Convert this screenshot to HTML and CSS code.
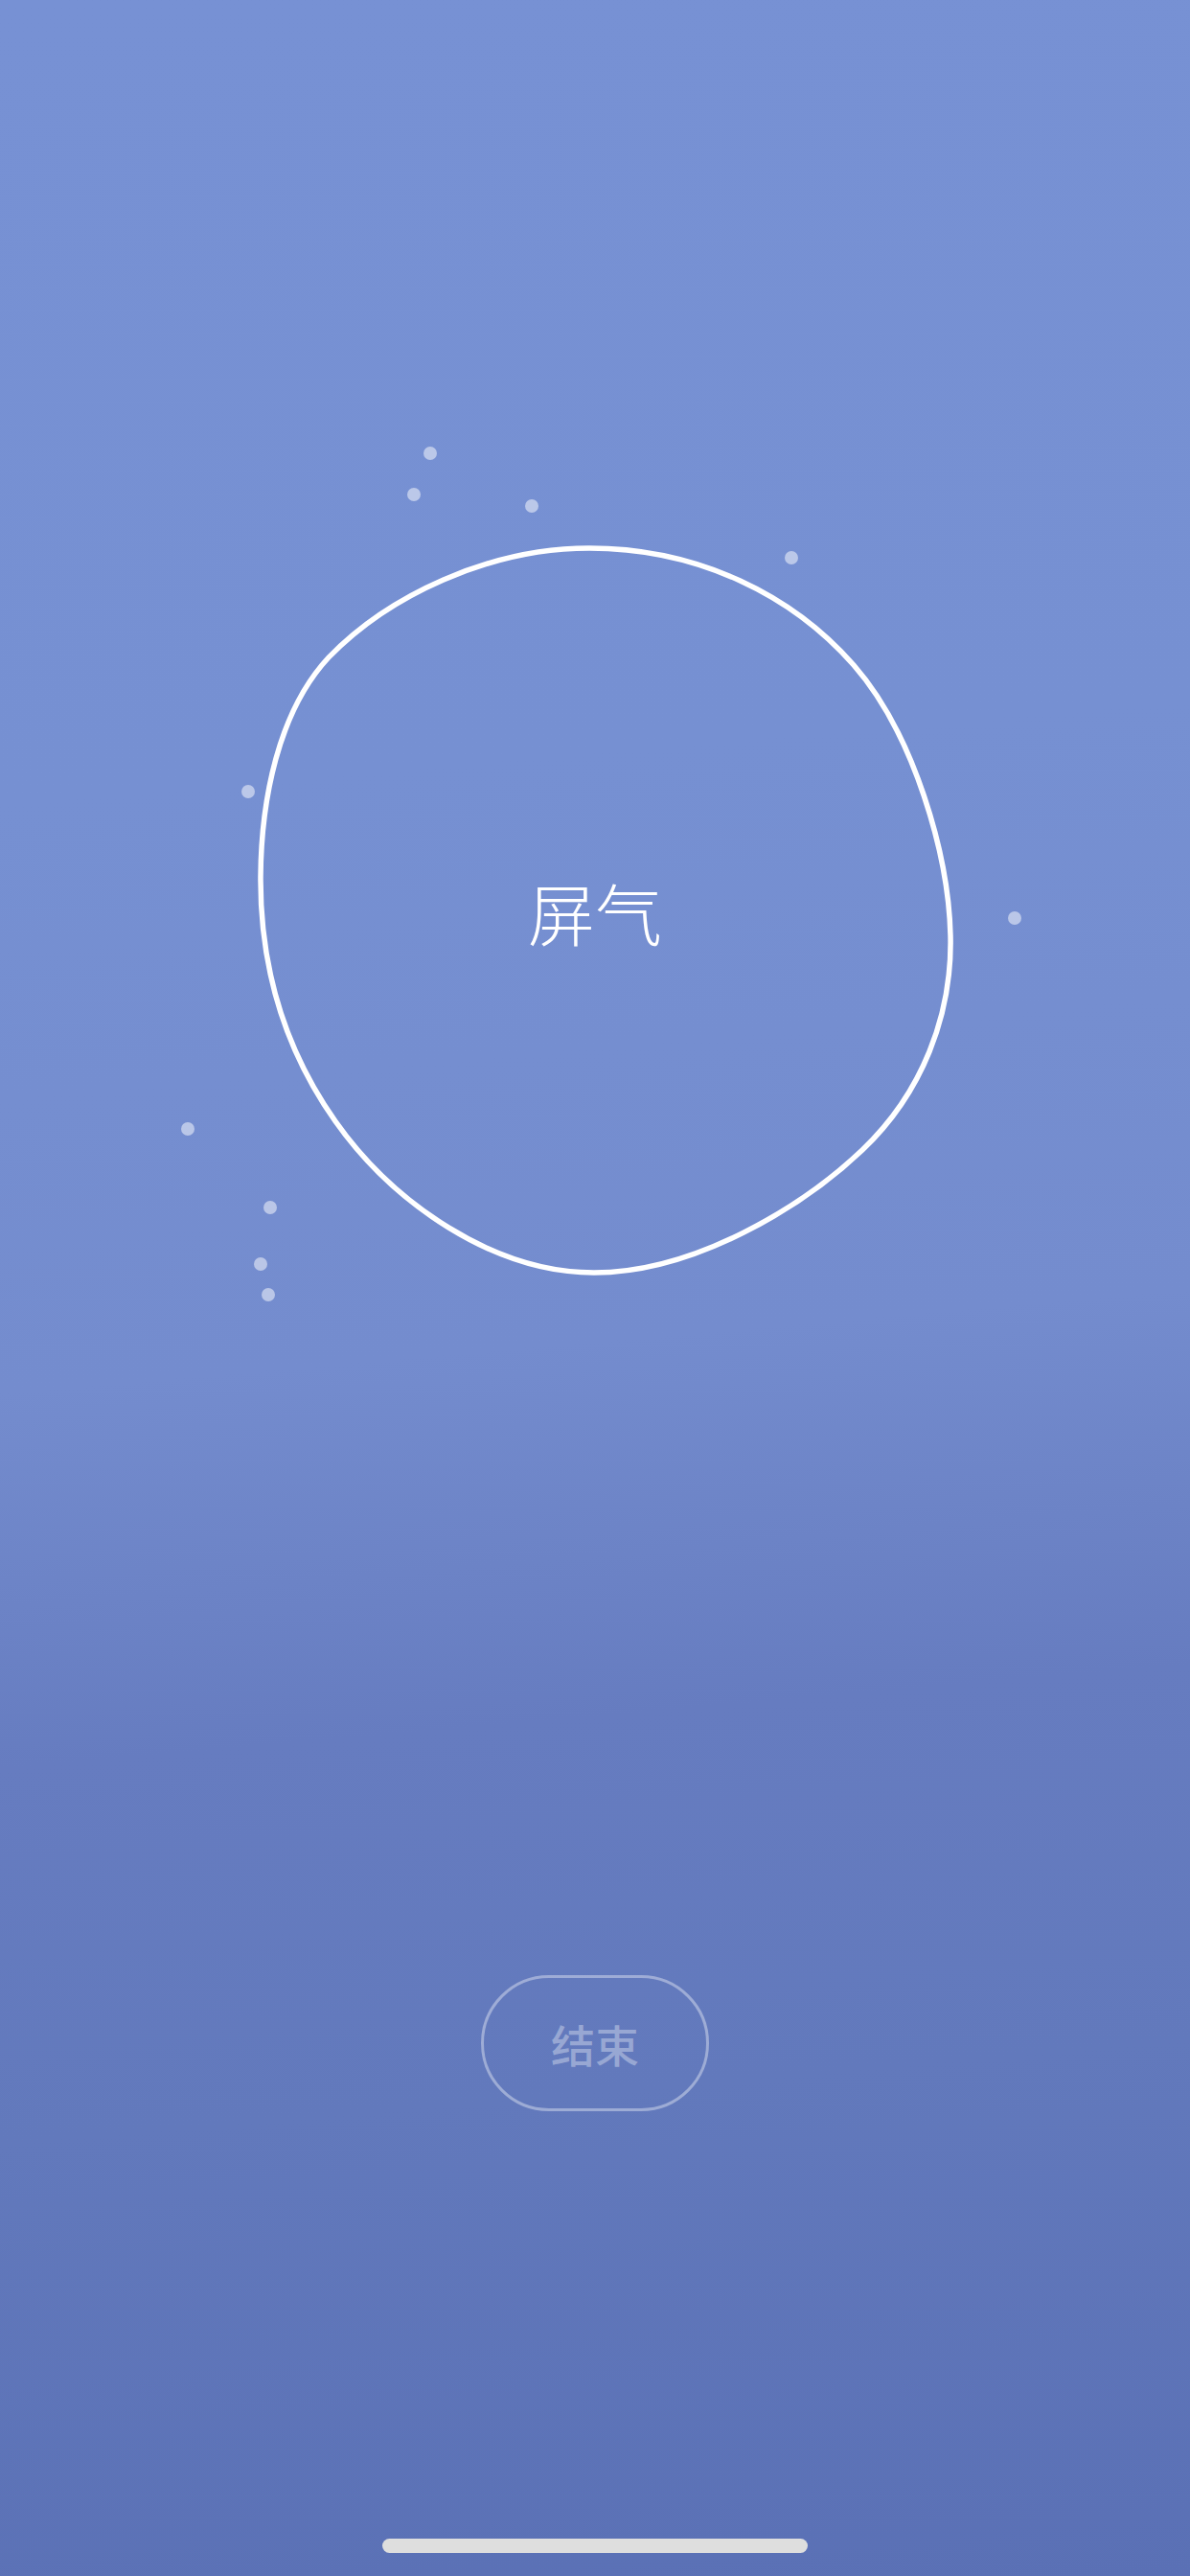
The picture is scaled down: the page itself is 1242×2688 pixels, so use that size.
FILE: index.html
```html
<!DOCTYPE html>
<html lang="zh">
<head>
<meta charset="utf-8">
<title>屏气</title>
<link rel="stylesheet" href="styles.css">
</head>
<body>
<div class="screen">
  <svg class="stage" width="1242" height="1400" viewBox="0 0 1242 1400" xmlns="http://www.w3.org/2000/svg">
    <g class="dots">
      <circle cx="449" cy="473" r="7"/>
      <circle cx="432" cy="516" r="7"/>
      <circle cx="555" cy="528" r="7"/>
      <circle cx="826" cy="582" r="7"/>
      <circle cx="259" cy="826" r="7"/>
      <circle cx="1059" cy="958" r="7"/>
      <circle cx="196" cy="1178" r="7"/>
      <circle cx="282" cy="1260" r="7"/>
      <circle cx="272" cy="1319" r="7"/>
      <circle cx="280" cy="1351" r="7"/>
    </g>
    <path class="blob" d="M615,572 C730,572 828,622 891,694 C954,766 990,892 992,976 C994,1060 962,1141 900,1200 C838,1259 725,1328 620,1328 C515,1328 410,1255 350,1170 C290,1085 271.5,994 272,915 C272.5,836 290,743 343,686 C405,622 510,572 615,572 Z"/>
    <text class="label" x="621" y="982" text-anchor="middle">屏气</text>
  </svg>
  <button class="end-btn" type="button">结束</button>
  <div class="home-indicator"></div>
</div>
</body>
</html>
```

FILE: styles.css
```css
html, body {
  margin: 0;
  padding: 0;
}

body {
  width: 1242px;
  height: 2688px;
  overflow: hidden;
  font-family: "Noto Sans CJK SC", "Noto Sans", sans-serif;
}

.screen {
  width: 1242px;
  height: 2688px;
  display: flex;
  flex-direction: column;
  align-items: center;
  background: linear-gradient(175deg, #7791d4 0%, #7690d2 30%, #748cce 52%, #6c83c6 60%, #667cc0 66%, #6279bc 80%, #5a70b5 100%);
}

.stage {
  display: block;
  flex: none;
}

.dots circle {
  fill: rgba(255, 255, 255, 0.5);
}

.blob {
  fill: none;
  stroke: #ffffff;
  stroke-width: 5.5;
  stroke-linejoin: round;
}

.label {
  fill: #ffffff;
  font-family: "Noto Sans CJK SC", sans-serif;
  font-size: 70px;
  font-weight: 300;
}

.end-btn {
  margin-top: 661px;
  width: 238px;
  height: 142px;
  box-sizing: border-box;
  border: 3px solid rgba(255, 255, 255, 0.38);
  border-radius: 71px;
  background: transparent;
  color: rgba(255, 255, 255, 0.36);
  font-family: "Noto Sans CJK SC", sans-serif;
  font-size: 46px;
  font-weight: 500;
  padding: 0;
  line-height: 1;
}

.home-indicator {
  margin-top: auto;
  margin-bottom: 24px;
  width: 444px;
  height: 15px;
  border-radius: 8px;
  background: #dedede;
}
```
